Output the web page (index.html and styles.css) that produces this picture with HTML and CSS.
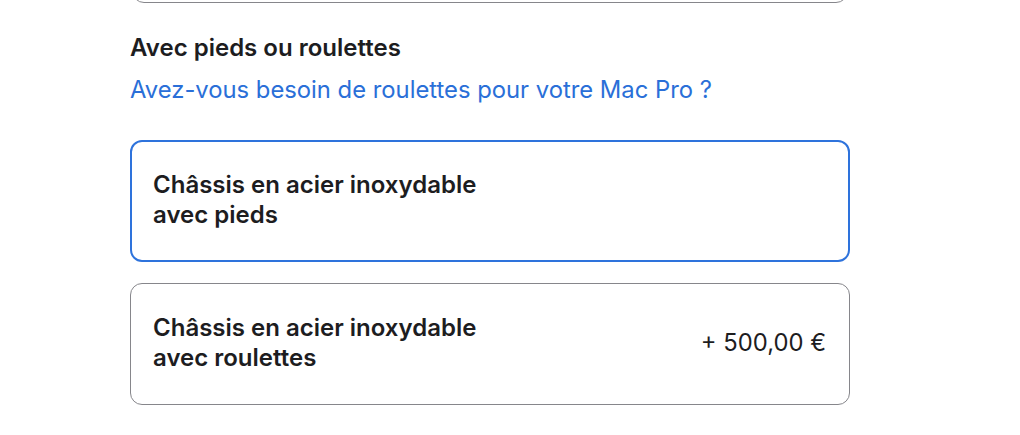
FILE: index.html
```html
<!DOCTYPE html>
<html lang="fr">
<head>
    <meta charset="UTF-8">
    <meta name="viewport" content="width=device-width, initial-scale=1.0">
    <title>Mac Pro - Configuration</title>
    <link rel="stylesheet" href="styles.css">
</head>
<body>
    <div class="config">
        <div class="option option-prev"></div>

        <section class="group">
            <h2 class="group-title">Avec pieds ou roulettes</h2>
            <a class="group-help" href="#">Avez-vous besoin de roulettes pour votre Mac Pro ?</a>

            <div class="options">
                <label class="option selected">
                    <span class="option-name">Châssis en acier inoxydable<br>avec pieds</span>
                </label>
                <label class="option">
                    <span class="option-name">Châssis en acier inoxydable<br>avec roulettes</span>
                    <span class="option-price">+ 500,00 €</span>
                </label>
            </div>
        </section>
    </div>
</body>
</html>
```

FILE: styles.css
```css
body {
    margin: 0;
    font-family: Inter, 'Noto Sans', sans-serif;
    color: #1d1d1f;
    background-color: #fff;
}
.config {
    width: 720px;
    margin-left: 130px;
}
.option {
    display: flex;
    justify-content: space-between;
    align-items: center;
    border: 1px solid #86868b;
    border-radius: 12px;
    padding: 29px 23px 31px 22px;
    font-size: 24px;
    line-height: 30px;
}
.option-prev {
    height: 40px;
    margin-top: -39px;
    padding: 0;
    margin-left: 2px;
    margin-right: 2px;
}
.group {
    padding-top: 31px;
}
.group-title {
    margin: 0;
    font-size: 24px;
    font-weight: 600;
    line-height: 28px;
}
.group-help {
    display: block;
    margin-top: 14px;
    color: #2a6fd8;
    text-decoration: none;
    font-size: 23.8px;
    line-height: 28px;
}
.options {
    display: flex;
    flex-direction: column;
    gap: 21px;
    margin-top: 36px;
}
.option.selected {
    border: 2px solid #2e73dc;
    padding: 28px 22px 30px 21px;
}
.option-name {
    font-weight: 600;
}
.option-price {
    font-size: 23.8px;
}
```
